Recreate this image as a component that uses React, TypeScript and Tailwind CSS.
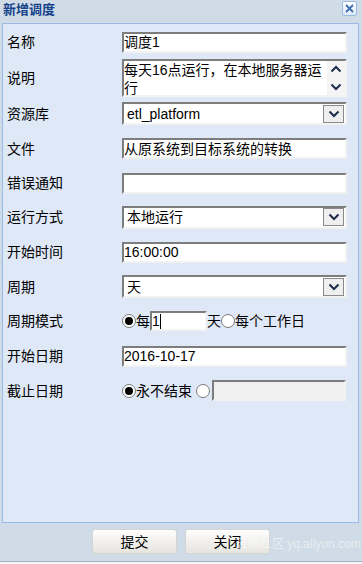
import React from "react";

const font = { fontFamily: '"Liberation Sans", "Noto Sans CJK SC", sans-serif' };

const inset =
  "border-2 border-t-[#7d7d7d] border-l-[#7d7d7d] border-r-[#f2f2f2] border-b-[#f2f2f2] bg-white";

function Chevron({ up = false }: { up?: boolean }) {
  return (
    <svg width="12" height="8" viewBox="0 0 12 8">
      <path
        d={up ? "M1.5 6.5 L6 2 L10.5 6.5" : "M1.5 1.5 L6 6 L10.5 1.5"}
        fill="none"
        stroke="#1c2c4a"
        strokeWidth="2"
      />
    </svg>
  );
}

function TextInput({ value, w = "w-[225px]", disabled = false }: { value: string; w?: string; disabled?: boolean }) {
  return (
    <div
      className={`${w} h-[21px] border-2 border-t-[#7d7d7d] border-l-[#7d7d7d] border-r-[#f2f2f2] border-b-[#f2f2f2] ${
        disabled ? "bg-[#f0f0f0]" : "bg-white"
      } flex items-center text-[14px] leading-[16px] text-black overflow-hidden whitespace-nowrap`}
    >
      {value}
    </div>
  );
}

function Select({ value }: { value: string }) {
  return (
    <div className={`w-[225px] h-[23px] ${inset} flex items-center justify-between`}>
      <span className="pl-[3px] text-[14px] leading-[16px] text-black whitespace-nowrap">{value}</span>
      <div className="w-[21px] h-[18px] mr-[1px] border border-[#8a8a8a] bg-[#efefef] flex items-center justify-center">
        <Chevron />
      </div>
    </div>
  );
}

function Radio({ checked }: { checked: boolean }) {
  return (
    <div className="w-[14px] h-[14px] rounded-full border border-[#7a7a7a] bg-white flex items-center justify-center shrink-0">
      {checked && <div className="w-[8px] h-[8px] rounded-full bg-black" />}
    </div>
  );
}

function Row({ label, h, children }: { label: string; h: string; children: React.ReactNode }) {
  return (
    <div className={`${h} flex items-center`}>
      <div className="w-[115px] text-[14px] leading-[16px] text-black">{label}</div>
      {children}
    </div>
  );
}

export default function App() {
  return (
    <div className="w-[362px] h-[564px] bg-[#cfdbe6] relative overflow-hidden" style={font}>
      {/* title bar */}
      <div className="h-[23px] flex items-start justify-between pl-[3px] pr-[5px]">
        <div className="pt-[2px] text-[13px] leading-[15px] font-bold text-[#15428b]">新增调度</div>
        <div className="mt-[1px] w-[15px] h-[15px] rounded-[2px] border border-[#99bbe8] bg-gradient-to-b from-white to-[#dde8f5] flex items-center justify-center">
          <svg width="9" height="9" viewBox="0 0 9 9">
            <path d="M1 1 L8 8 M8 1 L1 8" stroke="#3f6fb0" strokeWidth="1.8" />
          </svg>
        </div>
      </div>

      {/* panel */}
      <div className="ml-[2px] w-[357px] h-[500px] border border-[#99bbe8] bg-[#dfe8f6] pl-[4px]">
        <Row label="名称" h="h-[36px]">
          <TextInput value="调度1" />
        </Row>
        <Row label="说明" h="h-[36px]">
          <div className={`w-[225px] h-[38px] ${inset} flex`}>
            <div className="flex-1 text-[14px] leading-[18px] text-black overflow-hidden">
              每天16点运行，在本地服务器运行
            </div>
            <div className="w-[18px] flex flex-col items-center justify-between py-[4px] bg-[#f4f4f4]">
              <Chevron up />
              <Chevron />
            </div>
          </div>
        </Row>
        <Row label="资源库" h="h-[35px]">
          <Select value="etl_platform" />
        </Row>
        <Row label="文件" h="h-[35px]">
          <TextInput value="从原系统到目标系统的转换" />
        </Row>
        <Row label="错误通知" h="h-[34px]">
          <TextInput value="" />
        </Row>
        <Row label="运行方式" h="h-[34px]">
          <Select value="本地运行" />
        </Row>
        <Row label="开始时间" h="h-[36px]">
          <TextInput value="16:00:00" />
        </Row>
        <Row label="周期" h="h-[33px]">
          <Select value="天" />
        </Row>
        <Row label="周期模式" h="h-[36px]">
          <div className="flex items-center text-[14px] leading-[16px] text-black">
            <Radio checked />
            <span>每</span>
            <div className="w-[57px] h-[20px] border-2 border-t-[#7d7d7d] border-l-[#7d7d7d] border-r-[#f2f2f2] border-b-[#f2f2f2] bg-white flex items-center">
              <span>1</span>
              <span className="w-px h-[15px] bg-black" />
            </div>
            <span>天</span>
            <Radio checked={false} />
            <span>每个工作日</span>
          </div>
        </Row>
        <Row label="开始日期" h="h-[34px]">
          <TextInput value="2016-10-17" />
        </Row>
        <Row label="截止日期" h="h-[35px]">
          <div className="flex items-center text-[14px] leading-[16px] text-black">
            <Radio checked />
            <span>永不结束</span>
            <span className="w-[4px]" />
            <Radio checked={false} />
            <span className="w-[2px]" />
            <TextInput value="" w="w-[134px]" disabled />
          </div>
        </Row>
      </div>

      {/* footer */}
      <div className="h-[38px] flex items-start justify-center gap-[8px] pt-[6px]">
        <div className="w-[85px] h-[25px] rounded-[3px] border border-[#d4d4d4] bg-gradient-to-b from-white via-[#f1f0ed] to-[#e6e5e0] flex items-center justify-center text-[14px] leading-[16px] text-black">
          提交
        </div>
        <div className="w-[85px] h-[25px] rounded-[3px] border border-[#d4d4d4] bg-gradient-to-b from-white via-[#f1f0ed] to-[#e6e5e0] flex items-center justify-center text-[14px] leading-[16px] text-black">
          关闭
        </div>
      </div>
      <div className="h-[1px] bg-[#a4b0bb]" />
      <div className="h-[2px] bg-[#f4f6f8]" />

      <div className="absolute left-[236px] top-[537px] text-[12px] leading-[14px] text-white/50 whitespace-nowrap">
        云栖社区 yq.aliyun.com
      </div>
    </div>
  );
}
